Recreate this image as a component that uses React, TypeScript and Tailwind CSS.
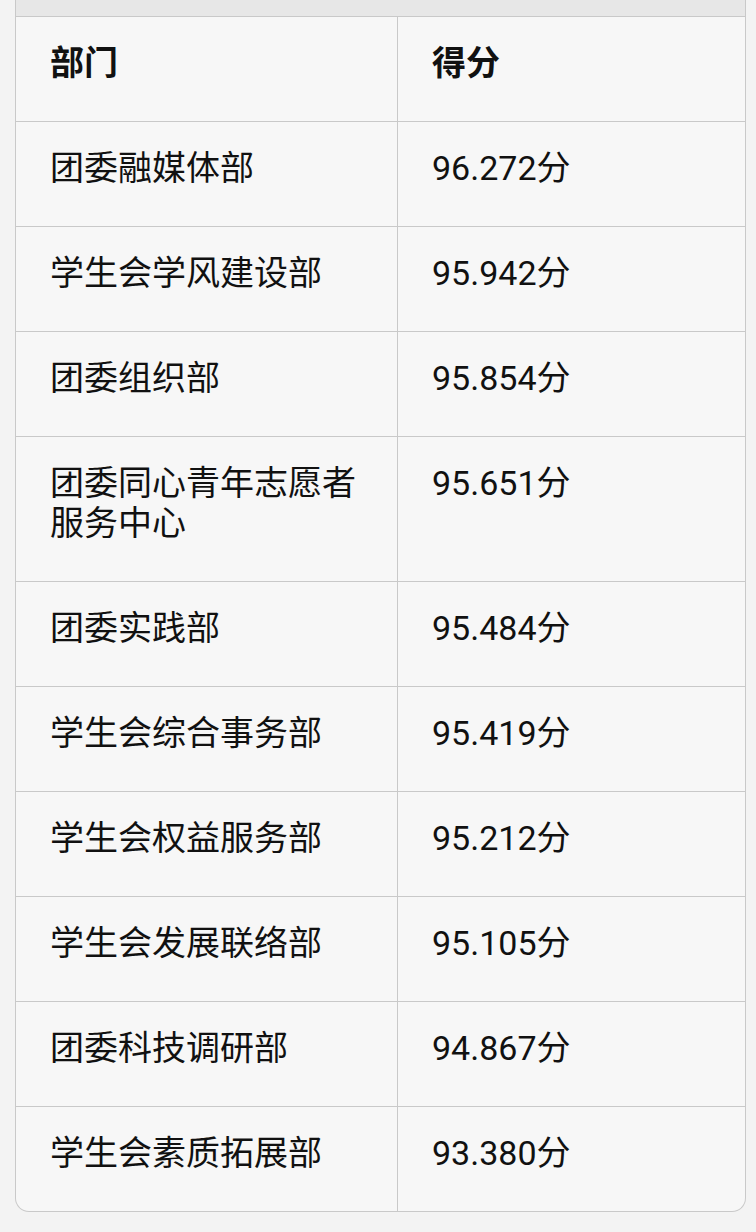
const rows: { dept: string; score: string }[] = [
  { dept: "团委融媒体部", score: "96.272分" },
  { dept: "学生会学风建设部", score: "95.942分" },
  { dept: "团委组织部", score: "95.854分" },
  { dept: "团委同心青年志愿者服务中心", score: "95.651分" },
  { dept: "团委实践部", score: "95.484分" },
  { dept: "学生会综合事务部", score: "95.419分" },
  { dept: "学生会权益服务部", score: "95.212分" },
  { dept: "学生会发展联络部", score: "95.105分" },
  { dept: "团委科技调研部", score: "94.867分" },
  { dept: "学生会素质拓展部", score: "93.380分" },
];

const cell = "px-[34px] pt-[26px] pb-[38px] text-[34px] leading-[40px]";

export default function App() {
  return (
    <div
      className="min-h-[1232px] bg-[#f3f3f3] pl-[15px] pr-[10px] text-[#111111]"
      style={{ fontFamily: 'Roboto, "Noto Sans CJK SC", sans-serif' }}
    >
      <div className="w-[731px] overflow-hidden rounded-b-[14px] border-x border-b border-[#c9c9c9] bg-[#f7f7f7]">
        <div className="h-[17px] border-b border-[#c9c9c9] bg-[#e7e7e7]" />
        <div className="grid grid-cols-[382px_1fr]">
          <div className={`${cell} border-r border-b border-[#c9c9c9] font-bold`}>部门</div>
          <div className={`${cell} border-b border-[#c9c9c9] font-bold`}>得分</div>
          {rows.map((r, i) => {
            const last = i === rows.length - 1;
            return (
              <div key={r.dept} className="contents">
                <div className={`${cell} border-r border-[#c9c9c9] ${last ? "" : "border-b"}`}>{r.dept}</div>
                <div className={`${cell} border-[#c9c9c9] ${last ? "" : "border-b"}`}>{r.score}</div>
              </div>
            );
          })}
        </div>
      </div>
    </div>
  );
}
